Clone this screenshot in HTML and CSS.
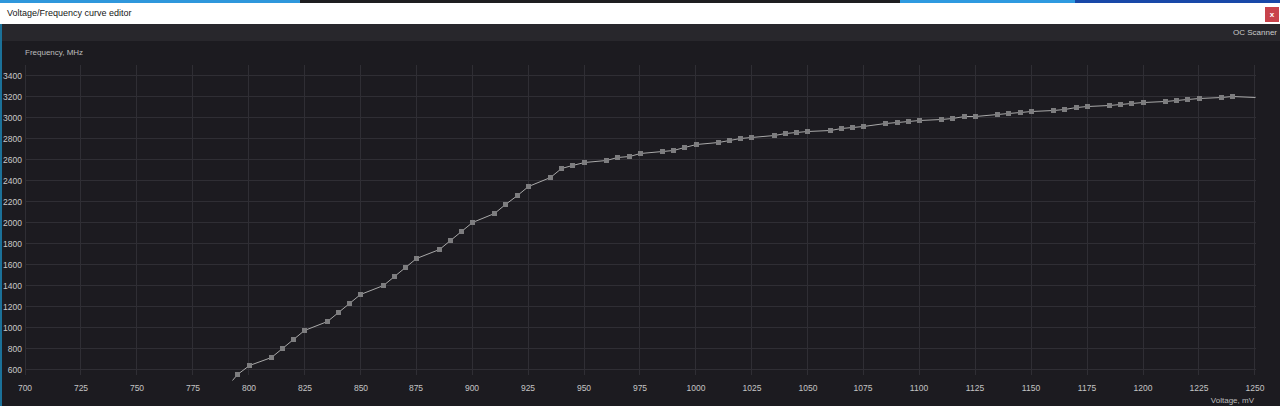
FILE: index.html
```html
<!DOCTYPE html>
<html lang="en">
<head>
<meta charset="utf-8">
<title>Voltage/Frequency curve editor</title>
<link rel="stylesheet" href="styles.css">
</head>
<body>
<div class="window">
  <div class="strip">
    <div class="seg seg-a"></div>
    <div class="seg seg-b"></div>
    <div class="seg seg-c"></div>
    <div class="seg seg-d"></div>
  </div>
  <div class="titlebar">
    <span class="title">Voltage/Frequency curve editor</span>
    <span class="close">x</span>
  </div>
  <div class="toolbar">
    <span class="oc">OC Scanner</span>
  </div>
  <div class="plot">
    <svg class="chart" width="1280" height="365" viewBox="0 41 1280 365" xmlns="http://www.w3.org/2000/svg">
      <defs>
        <marker id="pt" markerWidth="6" markerHeight="6" refX="3" refY="3" markerUnits="userSpaceOnUse">
          <rect x="0.5" y="0.5" width="5" height="5" class="pt"/>
        </marker>
      </defs>
      <text class="axis-title" x="25" y="55">Frequency, MHz</text>
      <path class="grid" d="M25 75.5H1256M25 96.5H1256M25 117.5H1256M25 138.5H1256M25 159.5H1256M25 180.5H1256M25 201.5H1256M25 222.5H1256M25 243.5H1256M25 264.5H1256M25 285.5H1256M25 306.5H1256M25 327.5H1256M25 348.5H1256M25 369.5H1256
        M25.5 65V375M80.5 65V375M136.5 65V375M192.5 65V375M248.5 65V375M304.5 65V375M360.5 65V375M416.5 65V375M472.5 65V375M528.5 65V375M584.5 65V375M639.5 65V375M695.5 65V375M751.5 65V375M807.5 65V375M863.5 65V375M919.5 65V375M975.5 65V375M1031.5 65V375M1087.5 65V375M1143.5 65V375M1198.5 65V375M1254.5 65V375"/>
      <g class="ylab">
        <text x="22" y="78.5">3400</text>
        <text x="22" y="99.5">3200</text>
        <text x="22" y="120.5">3000</text>
        <text x="22" y="141.5">2800</text>
        <text x="22" y="162.5">2600</text>
        <text x="22" y="183.5">2400</text>
        <text x="22" y="204.5">2200</text>
        <text x="22" y="225.5">2000</text>
        <text x="22" y="246.5">1800</text>
        <text x="22" y="267.5">1600</text>
        <text x="22" y="288.5">1400</text>
        <text x="22" y="309.5">1200</text>
        <text x="22" y="330.5">1000</text>
        <text x="22" y="351.5">800</text>
        <text x="22" y="372.5">600</text>
      </g>
      <g class="xlab">
        <text x="25" y="391">700</text>
        <text x="81" y="391">725</text>
        <text x="137" y="391">750</text>
        <text x="193" y="391">775</text>
        <text x="249" y="391">800</text>
        <text x="305" y="391">825</text>
        <text x="361" y="391">850</text>
        <text x="416" y="391">875</text>
        <text x="472" y="391">900</text>
        <text x="528" y="391">925</text>
        <text x="584" y="391">950</text>
        <text x="640" y="391">975</text>
        <text x="696" y="391">1000</text>
        <text x="752" y="391">1025</text>
        <text x="808" y="391">1050</text>
        <text x="863" y="391">1075</text>
        <text x="919" y="391">1100</text>
        <text x="975" y="391">1125</text>
        <text x="1031" y="391">1150</text>
        <text x="1087" y="391">1175</text>
        <text x="1143" y="391">1200</text>
        <text x="1199" y="391">1225</text>
        <text x="1255" y="391">1250</text>
      </g>
      <text class="axis-title end" x="1254" y="403">Voltage, mV</text>
      <polyline class="curve" marker-mid="url(#pt)" points="232.5,380.5 237.5,374.5 249.5,365.5 271.5,357.5 282.5,348.5 293.5,339.5 304.5,330.5 327.5,321.5 338.5,312.5 349.5,303.5 360.5,294.5 383.5,285.5 394.5,276.5 405.5,267.5 416.5,258.5 439.5,249.5 450.5,240.5 461.5,231.5 472.5,222.5 494.5,213.5 505.5,204.5 517.5,195.5 528.5,186.5 550.5,177.5 561.5,168.5 572.5,165.5 584.5,162.5 606.5,160.5 617.5,157.5 629.5,156.5 640.5,153.5 662.5,151.5 673.5,150.5 684.5,147.5 696.5,144.5 718.5,142.5 729.5,140.5 740.5,138.5 751.5,137.5 774.5,135.5 785.5,133.5 796.5,132.5 807.5,131.5 830.5,130.5 841.5,128.5 852.5,127.5 863.5,126.5 885.5,123.5 897.5,122.5 908.5,121.5 919.5,120.5 941.5,119.5 952.5,118.5 964.5,116.5 975.5,116.5 997.5,114.5 1008.5,113.5 1020.5,112.5 1031.5,111.5 1053.5,110.5 1064.5,109.5 1076.5,107.5 1087.5,106.5 1109.5,105.5 1120.5,104.5 1131.5,103.5 1143.5,102.5 1165.5,101.5 1176.5,100.5 1187.5,99.5 1199.5,98.5 1221.5,97.5 1232.5,96.5 1255.5,97.5"/>
    </svg>
  </div>
</div>
</body>
</html>
```

FILE: styles.css
```css
html, body {
  margin: 0;
  padding: 0;
  background: #1c1b20;
}

body {
  width: 1280px;
  height: 406px;
  overflow: hidden;
  font-family: "Liberation Sans", Arial, sans-serif;
}

.window {
  display: flex;
  flex-direction: column;
  width: 1280px;
  height: 406px;
}

.strip {
  display: flex;
  height: 3px;
  flex: none;
}

.seg-a { width: 300px; background: #2f97dc; }
.seg-b { width: 600px; background: #1e1e20; }
.seg-c { width: 175px; background: #2e9ae0; }
.seg-d { flex: 1; background: #1848a8; }

.titlebar {
  flex: none;
  height: 21px;
  background: #ffffff;
  display: flex;
  justify-content: space-between;
  align-items: center;
  padding: 0 1px 0 7px;
}

.title {
  font-size: 9px;
  color: #161616;
  line-height: 1;
}

.close {
  align-self: flex-start;
  margin-top: 4px;
  width: 14px;
  height: 15px;
  background: #c8434b;
  color: #ffffff;
  font-size: 8px;
  font-weight: bold;
  line-height: 1;
  display: flex;
  align-items: center;
  justify-content: center;
}

.toolbar {
  flex: none;
  height: 17px;
  background: #28272c;
  display: flex;
  justify-content: flex-end;
  align-items: center;
  padding-right: 3px;
  box-shadow: inset 2px 0 0 #1b7199;
}

.oc {
  font-size: 8px;
  color: #cbcbcb;
  line-height: 1;
}

.plot {
  flex: 1;
  background: #1c1b20;
  box-shadow: inset 2px 0 0 #1b7199;
}

.chart {
  display: block;
}

.grid {
  stroke: #2f2e34;
  stroke-width: 1;
  fill: none;
}

.axis-title {
  font-family: "Liberation Sans", Arial, sans-serif;
  font-size: 8px;
  fill: #bdbdbd;
}

.axis-title.end {
  text-anchor: end;
}

.ylab text {
  font-family: "Liberation Sans", Arial, sans-serif;
  font-size: 8.5px;
  fill: #cacaca;
  text-anchor: end;
}

.xlab text {
  font-family: "Liberation Sans", Arial, sans-serif;
  font-size: 8.5px;
  fill: #c4c4c4;
  text-anchor: middle;
}

.curve {
  fill: none;
  stroke: #a9a9a9;
  stroke-width: 1;
}

.pt {
  fill: #7d7d7f;
  stroke: none;
}
```
